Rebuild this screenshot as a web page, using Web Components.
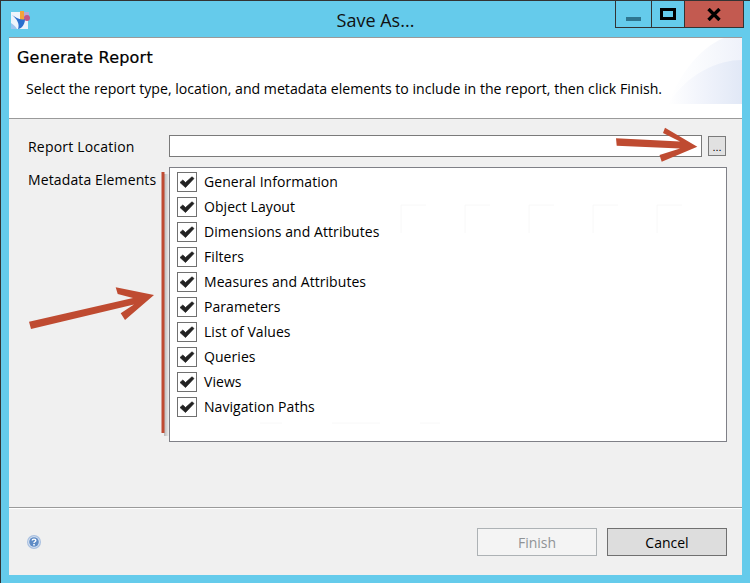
<!DOCTYPE html>
<html>
<head>
<meta charset="utf-8">
<title>Save As...</title>
<style>
  html, body { margin: 0; padding: 0; }
  body { font-family: "Open Sans", "Noto Sans", sans-serif; overflow: hidden; }
</style>
</head>
<body>
<save-dialog>
  <title-bar slot="title">Save As...</title-bar>
  <report-banner slot="banner" heading="Generate Report">Select the report type, location, and metadata elements to include in the report, then click Finish.</report-banner>
  <location-row slot="body" label="Report Location"></location-row>
  <metadata-row slot="body" label="Metadata Elements">
    <check-item>General Information</check-item>
    <check-item>Object Layout</check-item>
    <check-item>Dimensions and Attributes</check-item>
    <check-item>Filters</check-item>
    <check-item>Measures and Attributes</check-item>
    <check-item>Parameters</check-item>
    <check-item>List of Values</check-item>
    <check-item>Queries</check-item>
    <check-item>Views</check-item>
    <check-item>Navigation Paths</check-item>
  </metadata-row>
  <dialog-footer slot="footer"></dialog-footer>
</save-dialog>

<script>
const FONT = '"Open Sans", "Noto Sans", sans-serif';

class SaveDialog extends HTMLElement {
  constructor() {
    super();
    this.attachShadow({ mode: 'open' });
    this.shadowRoot.innerHTML = `
      <style>
        :host {
          position: relative;
          width: 750px;
          height: 583px;
          box-sizing: border-box;
          border-top: 1px solid #333;
          border-left: 1px solid #333;
          background: #65cbeb;
          padding: 0 8px 8px 8px;
          display: flex;
          flex-direction: column;
          font-family: ${FONT};
          overflow: hidden;
        }
        .content {
          flex: 1;
          display: flex;
          flex-direction: column;
          background: #f0f0f0;
          border-top: 1px solid #9a9a9a;
        }
        .body {
          flex: 1;
          display: flex;
          flex-direction: column;
          padding: 16px 15px 0 19px;
          gap: 10px;
        }
        svg.marks {
          position: absolute;
          left: -1px;
          top: -1px;
          pointer-events: none;
        }
      </style>
      <slot name="title"></slot>
      <div class="content">
        <slot name="banner"></slot>
        <div class="body"><slot name="body"></slot></div>
        <slot name="footer"></slot>
      </div>
      <svg class="marks" width="750" height="583" viewBox="0 0 750 583">
        <defs>
          <linearGradient id="sh" x1="0" x2="1" y1="0" y2="0">
            <stop offset="0" stop-color="#888" stop-opacity=".55"/>
            <stop offset="1" stop-color="#888" stop-opacity="0"/>
          </linearGradient>
        </defs>
        <rect x="164" y="174" width="5" height="262" fill="url(#sh)"/>
        <rect x="161.500" y="172" width="3" height="261" fill="#bf4b33"/>
        <!-- upper arrow -->
        <path d="M616 138.300 L680 141.500 L663 133 L665 127.700 L697.300 146.700 L661.700 161.700 L659.500 155 L680 148.500 L616.700 145.700 Z" fill="#bf4b31"/>
        <!-- lower arrow -->
        <path d="M29 321.700 L133 298 L117.700 294 L115.700 287.300 L154 295 L125 320 L120.700 313.300 L134 304.500 L31 329 Z" fill="#bf4b31"/>
      </svg>
    `;
  }
}

class TitleBar extends HTMLElement {
  constructor() {
    super();
    this.attachShadow({ mode: 'open' });
    this.shadowRoot.innerHTML = `
      <style>
        :host {
          display: flex;
          position: relative;
          height: 36px;
          margin-right: -8px;
          align-items: flex-start;
          justify-content: center;
          font-family: ${FONT};
        }
        .logo { position: absolute; left: 2px; top: 10px; }
        .text {
          font-size: 18px;
          line-height: 24px;
          margin-top: 7px;
          margin-left: -8px;
          color: #111;
        }
        .controls {
          position: absolute;
          right: 6px;
          top: 0;
          display: flex;
          height: 27px;
          border: 1px solid #333;
          border-top: 0;
          box-sizing: border-box;
        }
        .controls div {
          display: flex;
          align-items: center;
          justify-content: center;
          box-sizing: border-box;
        }
        .min { width: 36px; border-right: 1px solid #333; }
        .max { width: 33px; border-right: 1px solid #333; }
        .close { width: 58px; background: #c35a50; }
      </style>
      <svg class="logo" width="20" height="19" viewBox="0 0 20 19">
        <rect x="0" y="1" width="17" height="17" fill="#eef4fb"/>
        <rect x="9" y="0" width="4" height="9" fill="#f2a33a"/>
        <rect x="13" y="1" width="5" height="6" fill="#b7a9d6"/>
        <circle cx="16" cy="7" r="3" fill="#c0568a"/>
        <path d="M1 4 C5 6 9 10 14 8 C14 14 10 18 7 18 C9 13 6 8 1 4 Z" fill="#2a6fce"/>
        <path d="M0 12 C3 14 5 16 6 18 L0 18 Z" fill="#9cc4ee"/>
      </svg>
      <div class="text"><slot></slot></div>
      <div class="controls">
        <div class="min">
          <svg width="15" height="27" viewBox="0 0 15 27"><rect x="0" y="16" width="15" height="4" fill="#2e7690"/></svg>
        </div>
        <div class="max">
          <svg width="16" height="13" viewBox="0 0 16 13"><rect x="1.500" y="1.500" width="13" height="9" fill="none" stroke="#000" stroke-width="3"/></svg>
        </div>
        <div class="close">
          <svg width="14" height="13" viewBox="0 0 14 13"><path d="M1.500 1 L12.500 12 M12.500 1 L1.500 12" stroke="#000" stroke-width="3.400" fill="none"/></svg>
        </div>
      </div>
    `;
  }
}

class ReportBanner extends HTMLElement {
  constructor() {
    super();
    this.attachShadow({ mode: 'open' });
    this.shadowRoot.innerHTML = `
      <style>
        :host {
          display: block;
          position: relative;
          height: 81px;
          box-sizing: border-box;
          background: #fff;
          border-bottom: 1px solid #9a9a9a;
          font-family: ${FONT};
          color: #000;
        }
        svg { position: absolute; right: 0; top: 0; }
        h1 {
          position: relative;
          margin: 0;
          padding: 10px 0 0 8px;
          font: 400 16px/20px "DejaVu Sans", sans-serif;
          letter-spacing: .2px;
          -webkit-text-stroke: .2px #000;
        }
        p {
          position: relative;
          margin: 0;
          padding: 11px 0 0 17px;
          font-size: 14.130px;
          line-height: 20px;
          white-space: nowrap;
        }
      </style>
      <svg width="74" height="66" viewBox="0 0 74 66">
        <defs>
          <linearGradient id="a" x1="0" x2="1" y1="0" y2="0">
            <stop offset="0" stop-color="#fff"/>
            <stop offset=".35" stop-color="#fbfcfe"/>
            <stop offset="1" stop-color="#eff2fa"/>
          </linearGradient>
          <linearGradient id="b" x1="0" x2="1" y1="0" y2="0">
            <stop offset="0" stop-color="#fff"/>
            <stop offset=".5" stop-color="#f0f3fb"/>
            <stop offset="1" stop-color="#e1e8f6"/>
          </linearGradient>
        </defs>
        <path d="M0 66 C10 40 30 10 56 0 L74 0 L74 66 Z" fill="url(#a)"/>
        <path d="M0 66 C20 35 50 22 74 22 L74 66 Z" fill="url(#b)"/>
      </svg>
      <h1>${this.getAttribute('heading')}</h1>
      <p><slot></slot></p>
    `;
  }
}

class LocationRow extends HTMLElement {
  constructor() {
    super();
    this.attachShadow({ mode: 'open' });
    this.shadowRoot.innerHTML = `
      <style>
        :host {
          display: flex;
          align-items: center;
          height: 22px;
          font-family: ${FONT};
          font-size: 14px;
          color: #000;
        }
        .label { width: 141px; flex: none; letter-spacing: .2px; }
        .field {
          width: 533px;
          height: 22px;
          box-sizing: border-box;
          background: #fff;
          border: 1px solid #7a7a7a;
        }
        .browse {
          width: 18px;
          height: 20px;
          margin-left: 6px;
          box-sizing: border-box;
          border: 1px solid #7a7a7a;
          background: #e1e1e1;
          font: 11px/21px "Liberation Sans", sans-serif;
          text-align: center;
        }
      </style>
      <span class="label">${this.getAttribute('label')}</span>
      <div class="field"></div>
      <div class="browse">...</div>
    `;
  }
}

class MetadataRow extends HTMLElement {
  constructor() {
    super();
    this.attachShadow({ mode: 'open' });
    this.shadowRoot.innerHTML = `
      <style>
        :host {
          display: flex;
          align-items: flex-start;
          font-family: ${FONT};
          font-size: 14px;
          color: #000;
        }
        .label { width: 141px; flex: none; line-height: 20px; margin-top: 3px; letter-spacing: .12px; white-space: nowrap; }
        .list {
          position: relative;
          width: 558px;
          height: 275px;
          box-sizing: border-box;
          background: #fff;
          border: 1px solid #7f8087;
          padding: 4px 7px;
          display: flex;
          flex-direction: column;
          gap: 5px;
        }
        svg { position: absolute; left: 0; top: 0; }
      </style>
      <span class="label">${this.getAttribute('label')}</span>
      <div class="list">
        <svg width="556" height="273" fill="none" stroke="#f8f8f8">
          <path d="M231 65 V37 H256 M295 65 V37 H320 M359 65 V37 H384 M423 65 V37 H448 M487 65 V37 H512"/>
          <path d="M90 255 H112 M162 255 H210 M250 255 H270"/>
        </svg>
        <slot></slot>
      </div>
    `;
  }
}

class CheckItem extends HTMLElement {
  constructor() {
    super();
    this.attachShadow({ mode: 'open' });
    this.shadowRoot.innerHTML = `
      <style>
        :host {
          display: flex;
          position: relative;
          align-items: center;
          gap: 7px;
          height: 20px;
          font-family: ${FONT};
          font-size: 14px;
          letter-spacing: .06px;
          color: #000;
        }
        .box {
          width: 20px;
          height: 20px;
          flex: none;
          box-sizing: border-box;
          border: 1px solid #707070;
          background: #fff;
        }
        svg { display: block; }
        span { margin-top: -2px; }
      </style>
      <div class="box">
        <svg width="18" height="18" viewBox="0 0 18 18">
          <path d="M2 9.500 L4.800 7 L7.500 9.500 L14 3.800 L16 5.500 L7.500 14.500 Z" fill="#222" stroke="#222" stroke-width=".7" stroke-linejoin="round"/>
        </svg>
      </div>
      <span><slot></slot></span>
    `;
  }
}

class DialogFooter extends HTMLElement {
  constructor() {
    super();
    this.attachShadow({ mode: 'open' });
    this.shadowRoot.innerHTML = `
      <style>
        :host {
          display: flex;
          align-items: center;
          justify-content: space-between;
          height: 68px;
          box-sizing: border-box;
          border-top: 1px solid #9a9a9a;
          box-shadow: inset 0 1px 0 #fff;
          padding: 0 15px 0 18px;
          font-family: ${FONT};
          font-size: 14px;
        }
        .buttons { display: flex; gap: 10px; margin-top: 1px; }
        .btn {
          width: 120px;
          height: 28px;
          box-sizing: border-box;
          display: flex;
          align-items: center;
          justify-content: center;
          border: 1px solid #707070;
          background: #ddd;
          color: #000;
        }
        .off { border-color: #adb2b5; background: #f4f4f4; color: #8f9396; }
        svg { margin-top: 1px; }
      </style>
      <svg width="14" height="14" viewBox="0 0 14 14">
        <circle cx="7" cy="7" r="7" fill="#a9c0e0"/>
        <circle cx="7" cy="7" r="5.800" fill="#dbe5f3"/>
        <circle cx="7" cy="7" r="4.800" fill="#5f8cc6"/>
        <path d="M5.200 5.500 C5.200 3.700 8.800 3.700 8.800 5.500 C8.800 6.800 7 6.700 7 8" fill="none" stroke="#fff" stroke-width="1.400"/>
        <rect x="6.200" y="8.900" width="1.600" height="1.600" fill="#fff"/>
      </svg>
      <div class="buttons">
        <div class="btn off">Finish</div>
        <div class="btn">Cancel</div>
      </div>
    `;
  }
}

customElements.define('save-dialog', SaveDialog);
customElements.define('title-bar', TitleBar);
customElements.define('report-banner', ReportBanner);
customElements.define('location-row', LocationRow);
customElements.define('metadata-row', MetadataRow);
customElements.define('check-item', CheckItem);
customElements.define('dialog-footer', DialogFooter);
</script>
</body>
</html>
